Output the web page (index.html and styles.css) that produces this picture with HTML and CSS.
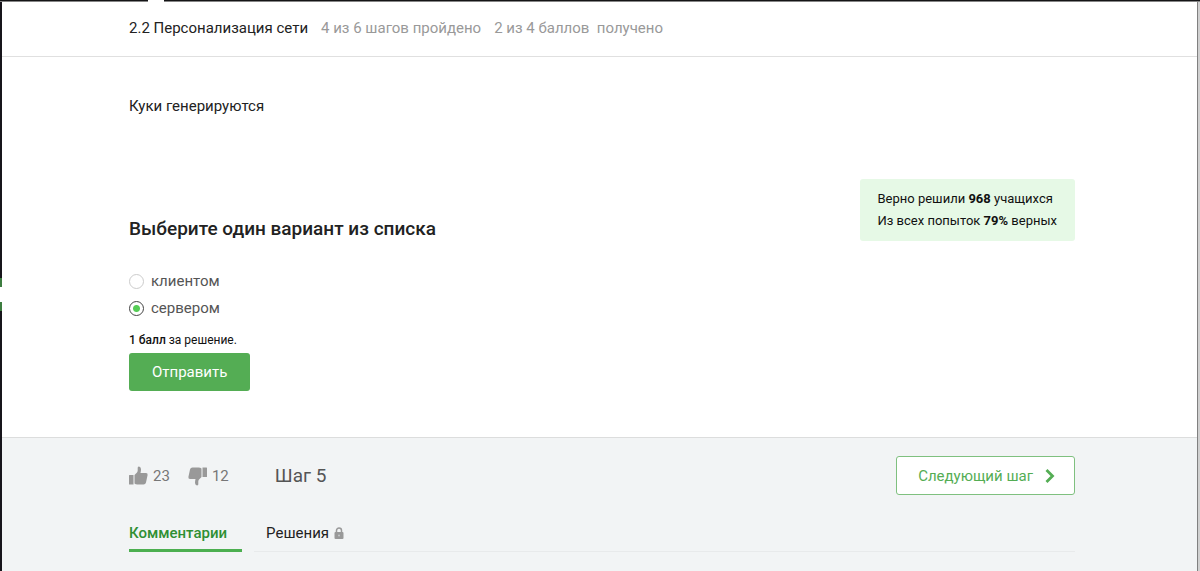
FILE: index.html
```html
<!DOCTYPE html>
<html lang="ru">
<head>
<meta charset="utf-8">
<meta name="viewport" content="width=device-width, initial-scale=1">
<title>Персонализация сети</title>
<link rel="stylesheet" href="styles.css">
</head>
<body>
<div class="top-edge"><span class="top-notch"></span></div>
<div class="frame">
  <div class="side-marker"></div>
  <div class="page">
    <header class="lesson-bar">
      <h1 class="lesson-title">2.2 Персонализация сети</h1>
      <span class="progress">4 из 6 шагов пройдено</span>
      <span class="progress">2 из 4 баллов&nbsp; получено</span>
    </header>
    <main class="step">
      <p class="question">Куки генерируются</p>
      <div class="quiz">
        <form class="quiz-form">
          <fieldset class="choices">
            <legend class="choices-title">Выберите один вариант из списка</legend>
            <label class="choice"><input class="radio" type="radio" name="answer">клиентом</label>
            <label class="choice"><input class="radio" type="radio" name="answer" checked>сервером</label>
          </fieldset>
          <p class="score"><b class="score-value">1 балл</b> за решение.</p>
          <button class="submit" type="button">Отправить</button>
        </form>
        <aside class="stats">
          <p class="stat">Верно решили <b>968</b> учащихся</p>
          <p class="stat">Из всех попыток <b>79%</b> верных</p>
        </aside>
      </div>
    </main>
    <footer class="step-footer">
      <div class="actions">
        <button class="vote" type="button" aria-label="Нравится: 23">
          <svg width="20" height="20" viewBox="0 0 20 20" fill="currentColor" aria-hidden="true"><path d="M0 9.500Q0 9 0.500 9H4.500V18.500H0.500Q0 18.500 0 18ZM5.500 9L8 6.500Q8.700 5.500 8.700 4.500V1.500Q9 0.500 10 0.500Q11.700 0.700 12 3Q12 5 11.500 7H17Q18.900 7.200 18.600 9L17 16.500Q16.500 18.500 14.500 18.500H8.500Q6.500 18.500 5.500 17.500Z"/></svg>23</button>
        <button class="vote" type="button" aria-label="Не нравится: 12">
          <svg width="20" height="20" viewBox="0 0 20 20" fill="currentColor" aria-hidden="true"><path transform="rotate(180 10 10)" d="M1 9.500Q1 9 1.500 9H5.500V18.500H1.500Q1 18.500 1 18ZM6.500 9L9 6.500Q9.700 5.500 9.700 4.500V1.500Q10 0.500 11 0.500Q12.700 0.700 13 3Q13 5 12.500 7H18Q19.900 7.200 19.600 9L18 16.500Q17.500 18.500 15.500 18.500H9.500Q7.500 18.500 6.500 17.500Z"/></svg>12</button>
        <h2 class="step-name">Шаг 5</h2>
        <button class="next" type="button">Следующий шаг
          <svg width="10" height="14" viewBox="0 0 10 14" fill="none" stroke="currentColor" stroke-width="2.800" aria-hidden="true"><path d="M1.500 1L7.500 7L1.500 13"/></svg></button>
      </div>
      <nav class="tabs">
        <a class="tab tab-active" href="#comments">Комментарии</a>
        <a class="tab" href="#solutions">Решения
          <svg width="10" height="12" viewBox="0 0 10 12" aria-hidden="true"><path d="M2.500 6V3.500A2.500 2.500 0 0 1 7.500 3.500V6" fill="none" stroke="currentColor" stroke-width="1.500"/><rect x="0.500" y="5" width="9" height="7" rx="1" fill="currentColor"/><circle cx="5" cy="8.500" r="1" fill="#c4c6c7"/></svg></a>
      </nav>
    </footer>
  </div>
</div>
</body>
</html>
```
FILE: styles.css
```css
* { box-sizing: border-box; }

body {
  margin: 0;
  min-height: 100vh;
  display: flex;
  flex-direction: column;
  font: 15px/22px Roboto, sans-serif;
  color: #222;
  background: #fff;
}

h1, h2, p, fieldset { margin: 0; padding: 0; border: 0; }
button { font: inherit; cursor: pointer; }
a { color: inherit; text-decoration: none; }
svg { display: block; flex: none; }

.top-edge {
  height: 2px;
  background: #141416;
  border-bottom: 1px solid #858585;
  padding-left: 148px;
}
.top-notch { display: block; width: 16px; height: 2px; background: #fff; }

.frame { flex: 1; display: flex; position: relative; border-left: 2px solid #17151b; }
.side-marker {
  position: absolute;
  left: -2px;
  top: 276px;
  width: 2px;
  height: 33px;
  background: #fff;
  border: solid #3d7d40;
  border-width: 9px 0;
}

.page {
  flex: 1;
  display: flex;
  flex-direction: column;
  border-right: 1px solid #808080;
  margin-right: 2px;
  box-shadow: 2px 0 #d0d0d0;
}

.lesson-bar {
  display: flex;
  align-items: center;
  gap: 13px;
  padding: 15px 122px 17px 127px;
  border-bottom: 1px solid #e0e0e0;
}
.lesson-title { font-size: 15px; font-weight: 400; }
.progress { color: #999; }

.step { padding: 38px 122px 45px 127px; }
.quiz {
  display: flex;
  justify-content: space-between;
  align-items: flex-start;
  margin-top: 61px;
}
.quiz-form { padding-top: 38px; }
.choices-title { padding: 0; font-size: 19px; line-height: 26px; font-weight: 500; margin-bottom: 26px; }
.choice { display: flex; align-items: center; gap: 7px; line-height: 27px; color: #555; }
.radio {
  appearance: none;
  width: 15px;
  height: 15px;
  margin: 0;
  border: 1px solid #ccc;
  border-radius: 50%;
  background: #fff;
}
.radio:checked {
  border-color: #444;
  background: radial-gradient(circle, #5c5 3px, #fff 4px);
}
.score { font-size: 12px; line-height: 16px; margin-top: 10px; color: #111; }
.score-value { font-weight: 500; }
.submit {
  display: block;
  margin-top: 5px;
  padding: 8px 23px;
  border: 0;
  border-radius: 3px;
  background: #54ad54;
  color: #fff;
}
.stats {
  margin-top: 1px;
  padding: 9px 18px;
  border-radius: 3px;
  background: #e6f9e6;
  color: #111;
  font-size: 13px;
}

.step-footer {
  flex: 1;
  padding: 18px 122px 18px 127px;
  border-top: 1px solid #dcdddd;
  background: #f2f4f5;
}
.step { padding-bottom: 46px; }
.actions { display: flex; align-items: center; }
.vote {
  display: flex;
  align-items: center;
  gap: 4px;
  margin-right: 18px;
  padding: 0;
  border: 0;
  background: none;
  color: #777;
}
.vote svg { color: #999; }
.step-name { margin-left: 28px; font-size: 19px; font-weight: 400; color: #555; }
.next {
  display: flex;
  align-items: center;
  gap: 12px;
  margin-left: auto;
  padding: 8px 19px 7px 21px;
  border: 1px solid #7fc07f;
  border-radius: 3px;
  background: #fff;
  color: #54ad54;
}
.tabs { display: flex; gap: 12px; margin-top: 27px; }
.tab {
  display: flex;
  align-items: center;
  gap: 5px;
  flex: 1;
  padding: 0 12px 7px;
  border-bottom: 1px solid #e8eaeb;
  align-self: flex-start;
}
.tab svg { color: #999; }
.tab-active {
  flex: none;
  padding: 0 15px 5px 0;
  border-bottom: 3px solid #4caf50;
  color: #2f8f33;
  font-weight: 500;
}
```
